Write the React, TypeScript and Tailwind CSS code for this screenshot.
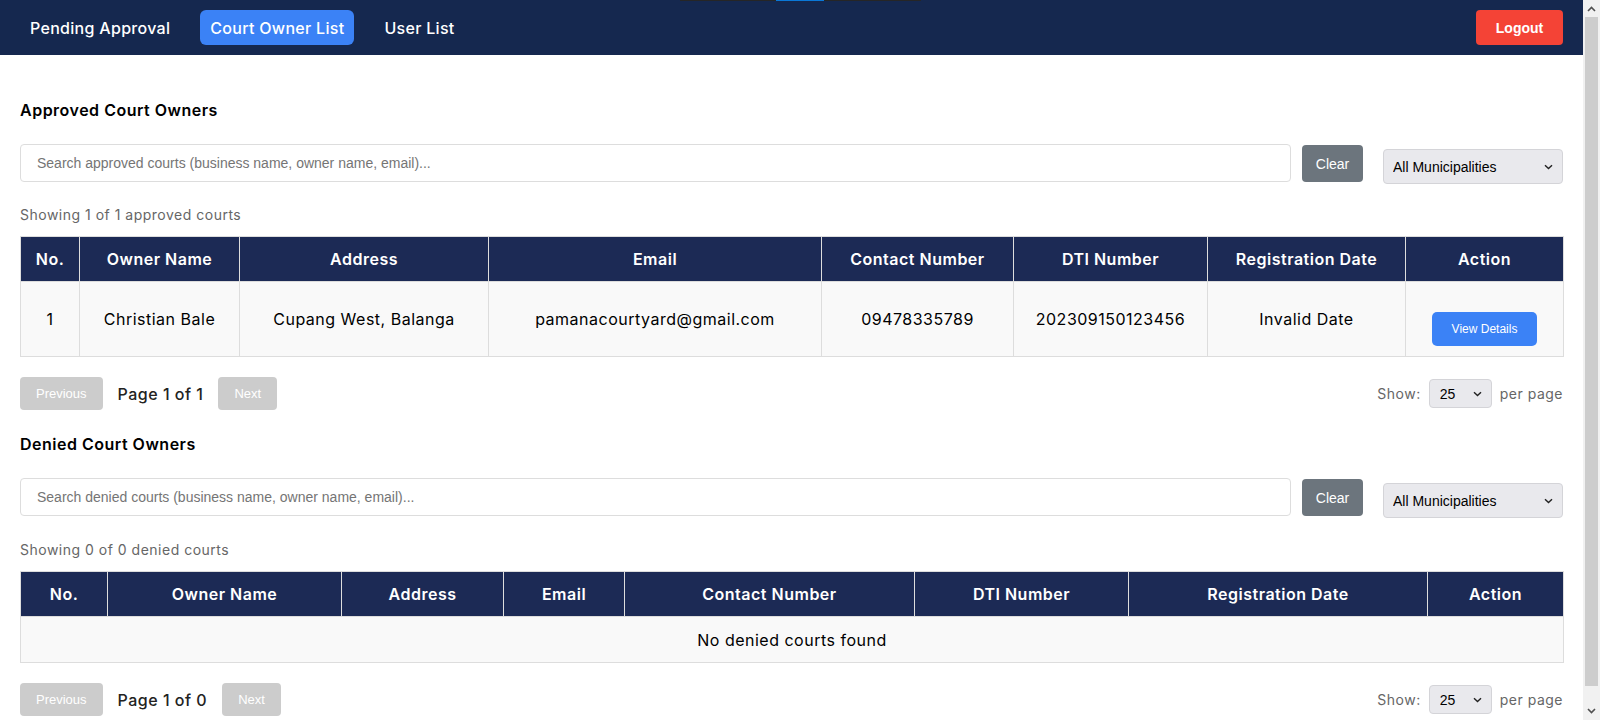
import { useState } from "react";

const approvedCols = ["w-[59px]", "w-[160px]", "w-[249px]", "w-[333px]", "w-[192px]", "w-[194px]", "w-[198px]", "w-[158px]"];
const deniedCols = ["w-[87px]", "w-[234px]", "w-[162px]", "w-[121px]", "w-[290px]", "w-[214px]", "w-[299px]", "w-[136px]"];
const headers = ["No.", "Owner Name", "Address", "Email", "Contact Number", "DTI Number", "Registration Date", "Action"];

const approved = [
  {
    owner: "Christian Bale",
    address: "Cupang West, Balanga",
    email: "pamanacourtyard@gmail.com",
    contact: "09478335789",
    dti: "202309150123456",
    date: "Invalid Date",
  },
];

const sys = "font-['Liberation_Sans',Arial,sans-serif] tracking-normal";

function Chevron() {
  return (
    <svg className="pointer-events-none absolute right-[10px] top-1/2 -translate-y-1/2" width="9" height="6" viewBox="0 0 9 6" fill="none">
      <path d="M1 1.2 4.5 4.6 8 1.2" stroke="#222" strokeWidth="1.4" />
    </svg>
  );
}

function SearchRow({ placeholder }: { placeholder: string }) {
  const [q, setQ] = useState("");
  return (
    <div className="flex items-start">
      <input
        value={q}
        onChange={(e) => setQ(e.target.value)}
        placeholder={placeholder}
        className={`h-[38px] flex-1 rounded border border-[#ddd] px-4 text-sm text-[#222] placeholder:text-[#757575] outline-none ${sys}`}
      />
      <button
        onClick={() => setQ("")}
        className={`ml-[11px] mt-px h-[37px] w-[61px] rounded bg-[#6c757d] text-sm text-white ${sys}`}
      >
        Clear
      </button>
      <div className="relative ml-5 mt-[5px]">
        <select className={`h-[35px] w-[180px] appearance-none rounded border border-[#d4d4d8] bg-[#e9e9ed] pl-[9px] text-sm text-black outline-none ${sys}`}>
          <option>All Municipalities</option>
        </select>
        <Chevron />
      </div>
    </div>
  );
}

function Pagination({ total }: { total: number }) {
  return (
    <div className="mt-5 flex h-[33px] items-center justify-between">
      <div className="flex items-center gap-[15px]">
        <button className={`h-[33px] rounded bg-[#ccc] px-4 text-[13px] text-white ${sys}`}>Previous</button>
        <span className="text-base font-medium text-[#222]">Page 1 of {total}</span>
        <button className={`h-[33px] rounded bg-[#ccc] px-4 text-[13px] text-white ${sys}`}>Next</button>
      </div>
      <div className="flex items-center text-sm text-[#666]">
        <span>Show:</span>
        <div className="relative ml-2">
          <select className={`h-[29px] w-[63px] appearance-none rounded border border-[#d4d4d8] bg-[#e9e9ed] pl-[10px] text-sm text-black outline-none ${sys}`}>
            <option>25</option>
            <option>50</option>
            <option>100</option>
          </select>
          <Chevron />
        </div>
        <span className="ml-2">per page</span>
      </div>
    </div>
  );
}

function Head({ cols }: { cols: string[] }) {
  return (
    <>
      <colgroup>
        {cols.map((c, i) => (
          <col key={i} className={c} />
        ))}
      </colgroup>
      <thead>
        <tr className="bg-[#1c2a55] text-white">
          {headers.map((h) => (
            <th key={h} className="h-[45px] border border-[#ddd] px-2 text-center text-base font-semibold">
              {h}
            </th>
          ))}
        </tr>
      </thead>
    </>
  );
}

// imitation of the window's classic scrollbar seen in the reference
function ScrollBar() {
  return (
    <aside className="flex h-[720px] w-[17px] shrink-0 flex-col bg-[#f1f1f1]">
      <div className="flex h-[17px] items-center justify-center">
        <svg width="9" height="6" viewBox="0 0 9 6" fill="none">
          <path d="M1 5 4.5 1.5 8 5" stroke="#505050" strokeWidth="1.6" />
        </svg>
      </div>
      <div className="mx-[2px] flex-1 bg-[#cdcdcd]" />
      <div className="mt-[17px] flex h-[17px] items-end justify-center pb-[6px]">
        <svg width="9" height="6" viewBox="0 0 9 6" fill="none">
          <path d="M1 1 4.5 4.5 8 1" stroke="#505050" strokeWidth="1.6" />
        </svg>
      </div>
    </aside>
  );
}

export default function App() {
  return (
    <div className="flex items-start bg-white">
      <div className="relative w-[1583px] shrink-0 font-['Inter',sans-serif] tracking-[0.5px] text-black">
        {/* thin strip at the very top */}
        <div className="absolute left-[680px] top-0 flex h-px w-[241px] bg-[#262626]">
          <div className="ml-[96px] h-px w-[48px] bg-[#0a78d7]" />
        </div>

        <nav className="flex h-[55px] items-center justify-between bg-[#15284f] px-5">
          <div className="flex items-center gap-5 tracking-[0.3px]">
            <button className="h-[35px] rounded-md px-2.5 text-base font-medium text-white">Pending Approval</button>
            <button className="h-[35px] rounded-md bg-[#3b82f6] px-2.5 text-base font-medium text-white">Court Owner List</button>
            <button className="h-[35px] rounded-md px-2.5 text-base font-medium text-white">User List</button>
          </div>
          <button className={`h-[35px] w-[87px] rounded bg-[#f44336] text-sm font-bold text-white ${sys}`}>Logout</button>
        </nav>

        <main className="px-5 pb-6 pt-[43px]">
          <section>
            <h2 className="mb-[22px] text-base leading-6 font-semibold">Approved Court Owners</h2>
            <SearchRow placeholder="Search approved courts (business name, owner name, email)..." />
            <p className="mb-[11px] mt-[21px] text-sm leading-5 text-[#666]">Showing 1 of 1 approved courts</p>
            <table className="w-full table-fixed border-collapse">
              <Head cols={approvedCols} />
              <tbody>
                {approved.map((r, i) => (
                  <tr key={i} className="bg-[#f9f9f9] text-center text-base">
                    <td className="border border-[#ddd] px-2 py-[10px]">{i + 1}</td>
                    <td className="border border-[#ddd] px-2 py-[10px]">{r.owner}</td>
                    <td className="border border-[#ddd] px-2 py-[10px]">{r.address}</td>
                    <td className="border border-[#ddd] px-2 py-[10px]">{r.email}</td>
                    <td className="border border-[#ddd] px-2 py-[10px]">{r.contact}</td>
                    <td className="border border-[#ddd] px-2 py-[10px]">{r.dti}</td>
                    <td className="border border-[#ddd] px-2 py-[10px]">{r.date}</td>
                    <td className="border border-[#ddd] px-2 py-[10px]">
                      <button className={`mt-5 h-[34px] w-[105px] rounded-[5px] bg-[#3b82f6] text-xs text-white ${sys}`}>
                        View Details
                      </button>
                    </td>
                  </tr>
                ))}
              </tbody>
            </table>
            <Pagination total={1} />
          </section>

          <section className="mt-[22px]">
            <h2 className="mb-[22px] text-base leading-6 font-semibold">Denied Court Owners</h2>
            <SearchRow placeholder="Search denied courts (business name, owner name, email)..." />
            <p className="mb-[11px] mt-[22px] text-sm leading-5 text-[#666]">Showing 0 of 0 denied courts</p>
            <table className="w-full table-fixed border-collapse">
              <Head cols={deniedCols} />
              <tbody>
                <tr className="bg-[#f9f9f9]">
                  <td colSpan={8} className="h-[46px] border border-[#ddd] text-center text-base">
                    No denied courts found
                  </td>
                </tr>
              </tbody>
            </table>
            <Pagination total={0} />
          </section>
        </main>
      </div>
      <ScrollBar />
    </div>
  );
}
